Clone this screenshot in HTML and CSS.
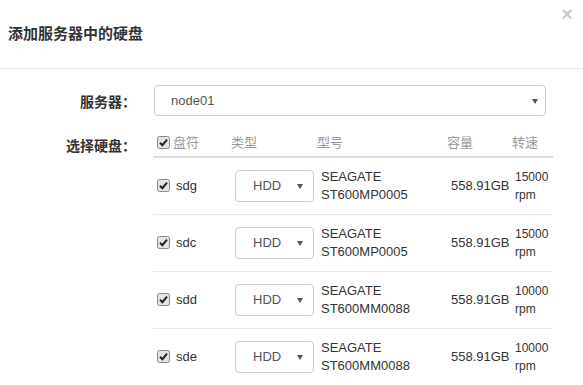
FILE: index.html
```html
<!DOCTYPE html>
<html lang="zh-CN">
<head>
  <meta charset="UTF-8" />
  <title>添加服务器中的硬盘</title>
  <link rel="stylesheet" href="styles.css">
</head>
<body>
  <div class="modal">
    <div class="modal-header">
      <span class="close">&times;</span>
      <h4 class="modal-title">添加服务器中的硬盘</h4>
    </div>

    <div class="modal-body">
      <div class="form-row">
        <label class="control-label">服务器：</label>
        <div class="select select-wide">node01</div>
      </div>

      <div class="form-row form-row-top">
        <label class="control-label label-disk">选择硬盘：</label>
        <table class="disk-table">
          <colgroup>
            <col class="c-name"><col class="c-type"><col class="c-model"><col class="c-size"><col class="c-speed">
          </colgroup>
          <thead>
            <tr>
              <th class="th-first">
                <svg class="check" viewBox="0 0 13 13"><rect x="0.5" y="0.5" width="12" height="12" rx="2" fill="#e4e4e4" stroke="#8a8a8a"/><path d="M3 6.8 L5.4 9.2 L10 3.6" fill="none" stroke="#222" stroke-width="2"/></svg>
                盘符
              </th>
              <th>类型</th>
              <th>型号</th>
              <th>容量</th>
              <th class="th-speed">转速</th>
            </tr>
          </thead>
          <tbody id="diskBody"></tbody>
        </table>
      </div>
    </div>
  </div>

  <script>
    const disks = [
      { name: "sdg", type: "HDD", model: "SEAGATE ST600MP0005", size: "558.91GB", speed: "15000 rpm" },
      { name: "sdc", type: "HDD", model: "SEAGATE ST600MP0005", size: "558.91GB", speed: "15000 rpm" },
      { name: "sdd", type: "HDD", model: "SEAGATE ST600MM0088", size: "558.91GB", speed: "10000 rpm" },
      { name: "sde", type: "HDD", model: "SEAGATE ST600MM0088", size: "558.91GB", speed: "10000 rpm" }
    ];

    const checkSvg = '<svg class="check" viewBox="0 0 13 13"><rect x="0.5" y="0.5" width="12" height="12" rx="2" fill="#e4e4e4" stroke="#8a8a8a"/><path d="M3 6.8 L5.4 9.2 L10 3.6" fill="none" stroke="#222" stroke-width="2"/></svg>';

    const body = document.getElementById("diskBody");
    disks.forEach(d => {
      const row = document.createElement("tr");
      row.innerHTML =
        `<td class="td-first">${checkSvg}<span class="disk-name">${d.name}</span></td>` +
        `<td><div class="select select-type">${d.type}</div></td>` +
        `<td class="model">${d.model}</td>` +
        `<td class="size">${d.size}</td>` +
        `<td class="speed">${d.speed}</td>`;
      body.appendChild(row);
    });
  </script>
</body>
</html>
```

FILE: styles.css
```css
body {
  margin: 0;
  background: #fff;
  font-family: "Liberation Sans", Arial, "Noto Sans CJK SC", sans-serif;
  font-size: 13px;
  color: #333;
}

.modal {
  position: relative;
  width: 583px;
}

.modal-header {
  padding: 19px 8px 21px;
  border-bottom: 1px solid #e5e5e5;
}

.modal-title {
  margin: 0;
  font-family: "Noto Sans CJK SC", sans-serif;
  font-size: 15px;
  line-height: 28px;
  font-weight: bold;
  color: #333;
}

.close {
  position: absolute;
  top: 3px;
  right: 10px;
  font-size: 20px;
  font-weight: bold;
  color: #000;
  opacity: 0.2;
}

.modal-body {
  padding: 16px 0 0;
}

.form-row {
  display: flex;
  align-items: center;
}

.form-row-top {
  align-items: flex-start;
  margin-top: 13px;
}

.control-label {
  width: 154px;
  padding-right: 18px;
  box-sizing: border-box;
  text-align: right;
  font-family: "Noto Sans CJK SC", sans-serif;
  font-size: 14px;
  font-weight: bold;
  color: #333;
}

.label-disk {
  width: 153px;
  padding-right: 17px;
  line-height: 24px;
  padding-top: 4px;
}

.select {
  position: relative;
  box-sizing: border-box;
  border: 1px solid #ccc;
  border-radius: 4px;
  background: #fff;
  color: #555;
}

.select::after {
  content: "";
  position: absolute;
  top: 50%;
  margin-top: -2px;
  border-left: 3px solid transparent;
  border-right: 3px solid transparent;
  border-top: 5px solid #555;
}

.select-wide {
  width: 392px;
  height: 31px;
  line-height: 29px;
  padding-left: 16px;
  font-size: 13px;
}

.select-wide::after {
  right: 7px;
}

.select-type {
  width: 79px;
  height: 32px;
  line-height: 30px;
  padding-left: 17px;
  font-size: 13px;
}

.select-type::after {
  right: 10px;
}

.disk-table {
  width: 400px;
  table-layout: fixed;
  border-collapse: collapse;
}

.c-name { width: 74px; }
.c-type { width: 86px; }
.c-model { width: 130px; }
.c-size { width: 68px; }
.c-speed { width: 42px; }

.disk-table th {
  padding: 0 4px 3px;
  height: 24px;
  text-align: left;
  font-family: "Noto Sans CJK SC", sans-serif;
  font-weight: normal;
  font-size: 13px;
  color: #999;
  border-bottom: 2px solid #ddd;
}

.disk-table th.th-speed {
  padding-left: 1px;
}

.th-first {
  white-space: nowrap;
}

.disk-table td {
  padding: 10px 4px 10px 8px;
  height: 36px;
  line-height: 18px;
  vertical-align: middle;
  border-bottom: 1px solid #e8e8e8;
}

.disk-table td.td-first {
  padding-left: 4px;
  white-space: nowrap;
}

.check {
  width: 13px;
  height: 13px;
  vertical-align: -2px;
}

.disk-name {
  margin-left: 6px;
}

.size {
  white-space: nowrap;
}

.disk-table td.speed {
  padding-left: 4px;
  padding-right: 2px;
  font-size: 12px;
}
```
